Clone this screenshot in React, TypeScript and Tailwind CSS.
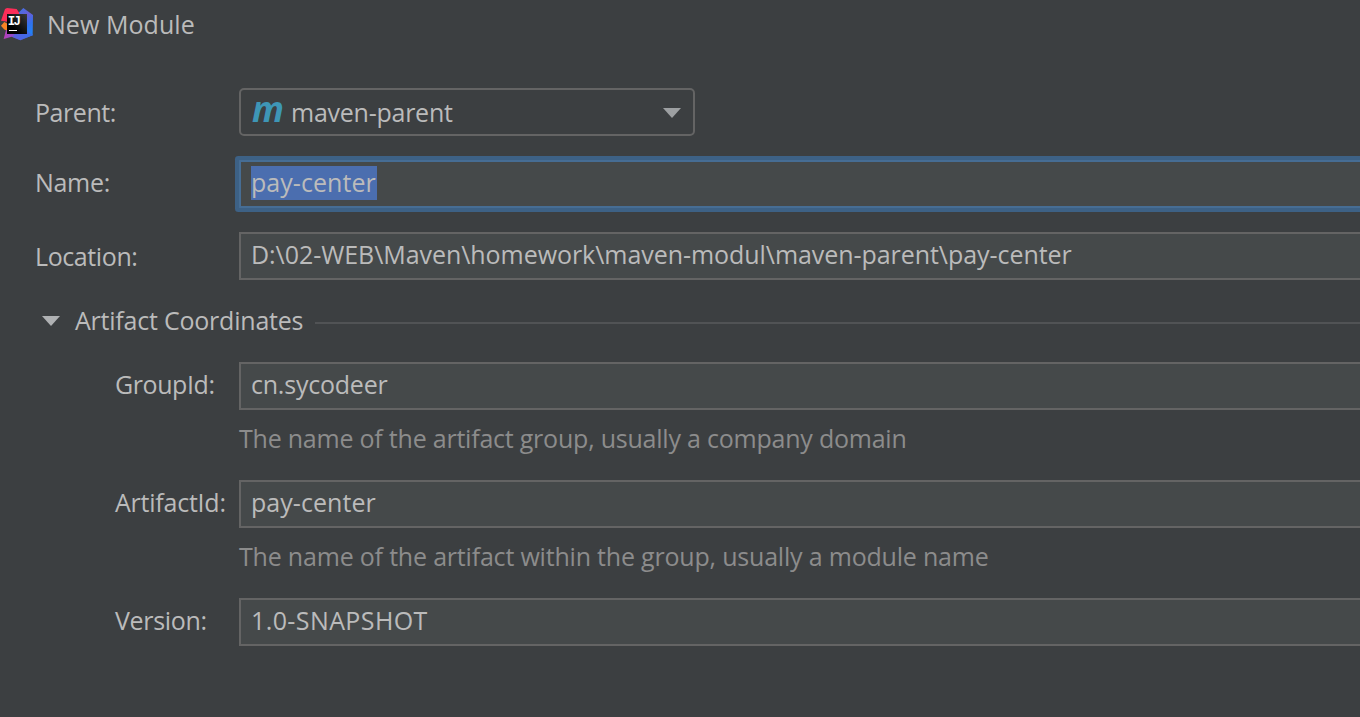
import type { ReactNode } from "react";

function Logo() {
  return (
    <svg width="34" height="42" viewBox="0 0 102 126" className="shrink-0">
      <defs>
        <linearGradient id="blue" x1="0" y1="0" x2="0.4" y2="1">
          <stop offset="0" stopColor="#3b74e8" />
          <stop offset="0.4" stopColor="#6a5cd6" />
          <stop offset="0.75" stopColor="#2f72ee" />
          <stop offset="1" stopColor="#2480f5" />
        </linearGradient>
        <linearGradient id="violet" x1="0" y1="0" x2="1" y2="0">
          <stop offset="0" stopColor="#b83fb4" />
          <stop offset="0.5" stopColor="#7a4fd8" />
          <stop offset="1" stopColor="#2f72ee" />
        </linearGradient>
        <linearGradient id="tile" x1="1" y1="0" x2="0.3" y2="0.7">
          <stop offset="0" stopColor="#3a3a3a" />
          <stop offset="1" stopColor="#000000" />
        </linearGradient>
      </defs>
      <path d="M3 77L13 66L28 74V96L12 88Z" fill="#fa8324" />
      <path d="M15 27L21 24L50 27L60 42L24 66L14 64L3 62Z" fill="#fc2d58" />
      <path d="M57 37L70 24L99 45L98 106L78 112L60 60Z" fill="url(#blue)" />
      <path d="M18 90L11 117L35 110L61 121L98 106L80 92Z" fill="url(#violet)" />
      <path d="M44 102H99L98 106L61 121L37 111Z" fill="#3770e6" fillOpacity="0.6" />
      <rect x="21" y="42" width="60" height="60" fill="url(#tile)" />
      <text x="23.5" y="75" fill="#ffffff" fontSize="37" fontWeight="700" letterSpacing="-5" fontFamily="Liberation Mono, monospace">IJ</text>
      <rect x="27" y="90" width="24" height="3" fill="#ffffff" />
    </svg>
  );
}

function Arrow({ className }: { className: string }) {
  return (
    <svg width="18" height="10" viewBox="0 0 18 10" className={className}>
      <path d="M0 0H18L9 10Z" fill="currentColor" />
    </svg>
  );
}

function Row({ label, labelClass, className, children }: { label: string; labelClass: string; className: string; children: ReactNode }) {
  return (
    <div className={`flex h-12 ${className}`}>
      <div className={`shrink-0 ${labelClass}`}>{label}</div>
      {children}
    </div>
  );
}

const field = "flex-1 border-2 border-r-0 border-[#646464] bg-[#45494a] pl-[10px] leading-[40px]";

export default function App() {
  return (
    <div className="h-[717px] w-full overflow-hidden whitespace-pre bg-[#3c3f41] font-['Open_Sans',sans-serif] text-[25px] text-[#bbbbbb]">
      <header className="flex h-12 leading-[48px]">
        <Logo />
        <h1 className="pl-[13px] tracking-[0.05px]">New Module</h1>
      </header>

      <Row label="Parent:" className="mt-10" labelClass="w-[239px] pl-[35px] leading-[48px] tracking-[-0.45px]">
        <div className="flex w-[456px] items-center rounded-[5px] border-2 border-[#646464] pl-[11px] pr-3">
          <span className="flex w-[39px] shrink-0">
            <span className="origin-left -translate-y-[3px] scale-x-[0.98] text-[36px] leading-[44px] font-bold italic text-[#3e96b6]">m</span>
          </span>
          <span className="leading-[44px] tracking-[-0.25px]">maven-parent</span>
          <Arrow className="ml-auto mt-px text-[#9da0a2]" />
        </div>
      </Row>

      <Row label="Name:" className="mt-6" labelClass="w-[239px] pl-[35px] leading-[44px] tracking-[-0.3px]">
        <div className="flex-1 rounded-l-[1px] border-2 border-r-0 border-[#466d94] bg-[#45494a] pt-1 pl-[10px] shadow-[0_0_0_4px_#3d6185]">
          <span className="block h-[34px] w-[126px] bg-[#4b6eaf] leading-[32px] tracking-[0.05px]">pay-center</span>
        </div>
      </Row>

      <Row label="Location:" className="mt-6" labelClass="w-[239px] pl-[35px] leading-[48px] tracking-[-0.4px]">
        <div className={`${field} tracking-[-0.055px]`}>D:\02-WEB\Maven\homework\maven-modul\maven-parent\pay-center</div>
      </Row>

      <div className="mt-4 mb-[18px] flex h-12 items-center pl-[42px] leading-[48px]">
        <Arrow className="mt-px text-[#afb1b3]" />
        <h2 className="w-[255px] pl-[15px] tracking-[-0.22px]">Artifact Coordinates</h2>
        <div className="mt-[6px] h-[2px] flex-1 bg-[#515355]" />
      </div>

      <Row label="GroupId:" className="" labelClass="w-[239px] pl-[115px] leading-[44px] tracking-[-0.42px]">
        <div className={`${field} tracking-[-0.22px]`}>cn.sycodeer</div>
      </Row>
      <p className="mb-[14px] pl-[239px] leading-[56px] tracking-[-0.22px] text-[#8c8c8c]">The name of the artifact group, usually a company domain</p>

      <Row label="ArtifactId:" className="" labelClass="w-[239px] pl-[115px] leading-[44px] tracking-[-0.23px]">
        <div className={`${field} tracking-[0.05px]`}>pay-center</div>
      </Row>
      <p className="mb-[14px] pl-[239px] leading-[56px] tracking-[-0.195px] text-[#8c8c8c]">The name of the artifact within the group, usually a module name</p>

      <Row label="Version:" className="" labelClass="w-[239px] pl-[115px] leading-[44px] tracking-[-0.32px]">
        <div className={`${field} tracking-[0.4px]`}>1.0-SNAPSHOT</div>
      </Row>
    </div>
  );
}
